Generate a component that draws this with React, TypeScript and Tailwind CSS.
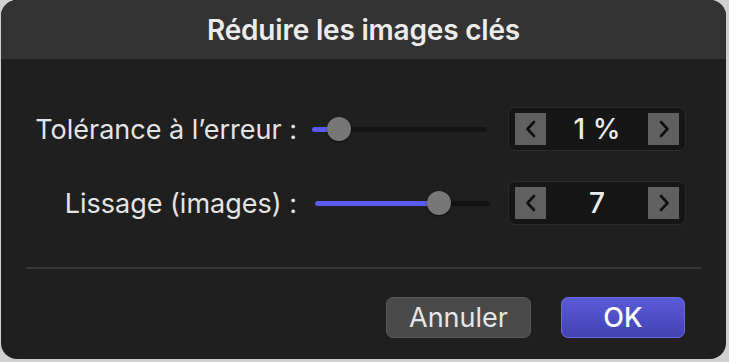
import type { FC } from "react";

const font = { fontFamily: '"Inter", "Liberation Sans", sans-serif' };

const Slider: FC<{ fill: string; thumb: string; width: string }> = ({ fill, thumb, width }) => (
  <div className={`relative h-[24px] ${width}`}>
    <div className="absolute left-0 right-0 top-[10px] h-[5px] rounded-full bg-[#131313]" />
    <div className={`absolute left-0 top-[10px] h-[5px] rounded-full bg-[#5b5bf0] ${fill}`} />
    <div className={`absolute top-0 h-[24px] w-[24px] rounded-full bg-[#777777] shadow-[0_1px_2px_rgba(0,0,0,0.6)] ${thumb}`} />
  </div>
);

const Arrow: FC<{ dir: "l" | "r" }> = ({ dir }) => (
  <div className="flex h-[32px] w-[31px] items-center justify-center bg-[#606060]">
    <svg width="14" height="20" viewBox="0 0 14 20" fill="none">
      <path
        d={dir === "l" ? "M10 3 L3.5 10 L10 17" : "M4 3 L10.5 10 L4 17"}
        stroke="#101010"
        strokeWidth="2.6"
        strokeLinecap="round"
        strokeLinejoin="round"
      />
    </svg>
  </div>
);

const Stepper: FC<{ value: string }> = ({ value }) => (
  <div className="flex h-[44px] w-[178px] items-center justify-between rounded-[7px] border border-[#2c2c2c] bg-[#161616] px-[6px]">
    <Arrow dir="l" />
    <span className="text-[28px] font-medium leading-none text-[#ececec]">{value}</span>
    <Arrow dir="r" />
  </div>
);

export default function App() {
  return (
    <div className="h-[362px] w-[729px] bg-[#cfcfcf] pl-[1px]" style={font}>
      <div className="flex h-[359px] w-[725px] flex-col overflow-hidden rounded-[16px] bg-[#1f1f1f]">
        <div className="flex h-[59px] items-center justify-center bg-[#333333]">
          <h1 className="text-[28px] font-semibold tracking-[-0.2px] text-[#ececec]">Réduire les images clés</h1>
        </div>
        <div className="flex flex-col gap-[30px] pt-[48px]">
          <div className="flex items-center">
            <div className="w-[297px] pr-[1px] text-right text-[27px] leading-none text-[#e4e4e4]">Tolérance à l’erreur :</div>
            <div className="ml-[14px]">
              <Slider width="w-[175px]" fill="w-[28px]" thumb="left-[15px]" />
            </div>
            <div className="ml-[21px]">
              <Stepper value="1 %" />
            </div>
          </div>
          <div className="flex items-center">
            <div className="w-[297px] pr-[1px] text-right text-[27px] leading-none text-[#e4e4e4]">Lissage (images) :</div>
            <div className="ml-[17px]">
              <Slider width="w-[175px]" fill="w-[124px]" thumb="left-[112px]" />
            </div>
            <div className="ml-[18px]">
              <Stepper value="7" />
            </div>
          </div>
        </div>
        <div className="mx-[25px] mt-[42px] h-[2px] bg-[#383838]" />
        <div className="flex justify-end gap-[30px] pr-[41px] pt-[28px]">
          <button className="h-[41px] w-[145px] rounded-[7px] border border-[#5a5a5a] bg-[#4a4a4a] text-[27px] leading-none text-[#e6e6e6]">
            Annuler
          </button>
          <button className="h-[41px] w-[124px] rounded-[7px] border border-[#6a6ae0] bg-gradient-to-b from-[#5a5ad8] to-[#4343b4] text-[27px] font-medium leading-none text-white">
            OK
          </button>
        </div>
      </div>
    </div>
  );
}
